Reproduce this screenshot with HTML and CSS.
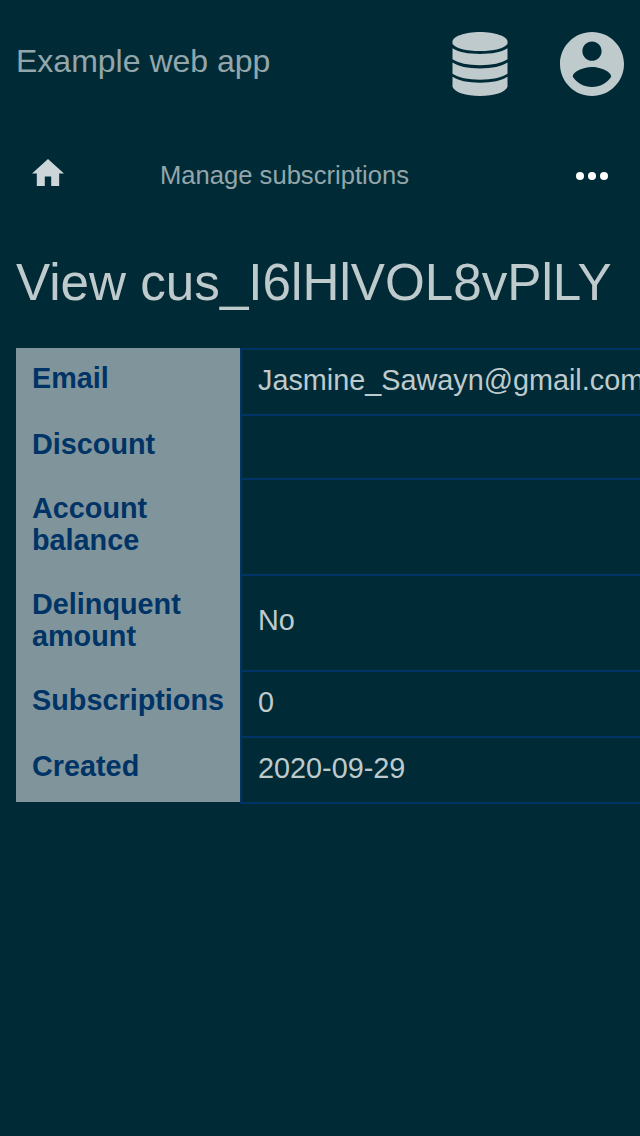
FILE: index.html
```html
<!DOCTYPE html>
<html lang="en">
<head>
<meta charset="utf-8">
<title>Example web app</title>
<link rel="stylesheet" href="styles.css">
</head>
<body>
<header class="topbar">
  <a class="brand">Example web app</a>
  <svg class="icon-database" viewBox="0 0 56 64">
    <path d="M28 0C43 0 55.5 4.5 55.5 9.5V12C52 16.500 42 19 28 19S4 16.500 .5 12V9.500C.5 4.500 13 0 28 0z"/>
    <path d="M.5 16.300C6 20.200 16 22 28 22s22-1.800 27.500-5.700v11C50 31.200 40 33.200 28 33.200S6 31.200.5 27.300z"/>
    <path d="M.5 30.500C6 34.400 16 36.400 28 36.400s22-2 27.500-5.900v11.300C50 45.700 40 47.700 28 47.700S6 45.700.5 41.800z"/>
    <path d="M.5 44.800C6 48.700 16 50.700 28 50.700s22-2 27.500-5.900v10C53.500 60.500 42 64 28 64S2.500 60.500.5 54.800z"/>
  </svg>
  <svg class="icon-account" viewBox="2 2 20 20">
    <path d="M12 2C6.48 2 2 6.48 2 12s4.480 10 10 10 10-4.480 10-10S17.520 2 12 2zm0 3c1.660 0 3 1.340 3 3s-1.340 3-3 3-3-1.340-3-3 1.340-3 3-3zm0 14.200c-2.500 0-4.710-1.280-6-3.220.03-1.990 4-3.080 6-3.080 1.990 0 5.970 1.090 6 3.080-1.290 1.940-3.500 3.220-6 3.220z"/>
  </svg>
</header>
<nav class="subnav">
  <svg class="icon-home" viewBox="2 3 20 17"><path d="M10 20v-6h4v6h5v-8h3L12 3 2 12h3v8z"/></svg>
  <a class="section">Manage subscriptions</a>
  <svg class="icon-more" viewBox="0 0 32 8"><circle cx="4" cy="4" r="4"/><circle cx="16" cy="4" r="4"/><circle cx="28" cy="4" r="4"/></svg>
</nav>
<main class="content">
  <h1 class="title">View cus_I6lHlVOL8vPlLY</h1>
  <div class="details">
    <div class="label">Email</div><div class="value">Jasmine_Sawayn@gmail.com</div>
    <div class="label">Discount</div><div class="value"></div>
    <div class="label">Account balance</div><div class="value"></div>
    <div class="label">Delinquent amount</div><div class="value value-tall">No</div>
    <div class="label">Subscriptions</div><div class="value">0</div>
    <div class="label label-last">Created</div><div class="value value-last">2020-09-29</div>
  </div>
</main>
</body>
</html>
```
FILE: styles.css
```css
* { box-sizing: border-box; }
html { overflow: hidden; }
body {
  margin: 0;
  height: 1136px;
  overflow: hidden;
  background: #002b36;
  color: #bfcacd;
  font-family: "Liberation Sans", Arial, sans-serif;
}
svg { display: block; flex: none; fill: #bfcacd; }
.topbar { display: flex; height: 128px; padding: 32px 16px; }
.brand { flex: 1; padding-top: 11px; font-size: 32px; line-height: 36px; color: #93a6ab; }
.icon-database { width: 56px; height: 64px; margin-right: 52px; }
.icon-account { width: 64px; height: 64px; }
.subnav { display: flex; height: 96px; padding: 0 32px; align-items: flex-start; }
.icon-home { width: 32px; height: 27.2px; margin-top: 30.8px; fill: #ccd5d7; }
.section { flex: 1; margin-left: 96px; padding-top: 33px; font-size: 25.6px; line-height: 29px; color: #93a6ab; }
.icon-more { width: 32px; height: 8px; margin-top: 44px; fill: #fff; }
.content { padding: 0 16px; }
.title { height: 124px; margin: 0; padding-top: 30px; font-size: 51.2px; font-weight: 400; line-height: 58px; white-space: nowrap; }
.details {
  display: grid;
  grid-template-columns: 224px 384px;
  grid-template-rows: 66px 64px 96px 96px 66px 68px;
  font-size: 28.8px;
  line-height: 32px;
}
.label { padding: 14px 16px; background: #80959b; color: #003366; font-weight: 700; }
.label-last { margin-bottom: 2px; }
.value { display: flex; align-items: center; padding: 0 0 4px 16px; border-top: 2px solid #003366; border-left: 2px solid #003366; white-space: nowrap; }
.value-tall { padding-bottom: 6px; }
.value-last { border-bottom: 2px solid #003366; }
.value { margin-right: -16px; }
```
